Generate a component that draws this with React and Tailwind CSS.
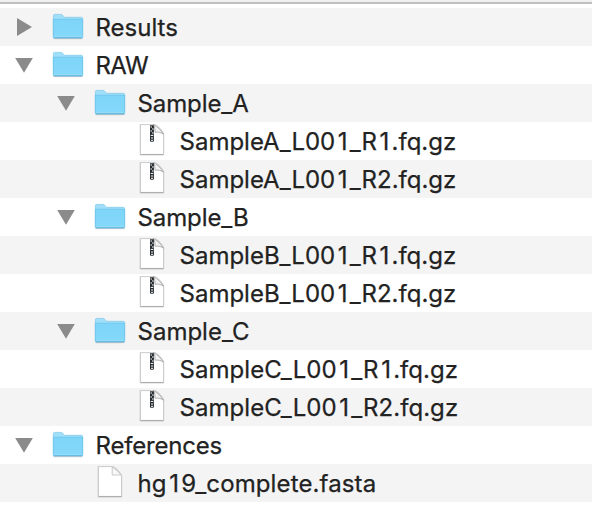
const rows = [
  { name: "Results", kind: "folder", pad: "pl-[14px]", open: false, track: "tracking-[0px]" },
  { name: "RAW", kind: "folder", pad: "pl-[14px]", open: true, track: "tracking-[-0.6px]" },
  { name: "Sample_A", kind: "folder", pad: "pl-[56px]", open: true, track: "tracking-[-0.1px]" },
  { name: "SampleA_L001_R1.fq.gz", kind: "zip", pad: "pl-[98px]", track: "tracking-[0px]" },
  { name: "SampleA_L001_R2.fq.gz", kind: "zip", pad: "pl-[98px]", track: "tracking-[0px]" },
  { name: "Sample_B", kind: "folder", pad: "pl-[56px]", open: true, track: "tracking-[-0.1px]" },
  { name: "SampleB_L001_R1.fq.gz", kind: "zip", pad: "pl-[98px]", track: "tracking-[0px]" },
  { name: "SampleB_L001_R2.fq.gz", kind: "zip", pad: "pl-[98px]", track: "tracking-[0px]" },
  { name: "Sample_C", kind: "folder", pad: "pl-[56px]", open: true, track: "tracking-[0px]" },
  { name: "SampleC_L001_R1.fq.gz", kind: "zip", pad: "pl-[98px]", track: "tracking-[0.05px]" },
  { name: "SampleC_L001_R2.fq.gz", kind: "zip", pad: "pl-[98px]", track: "tracking-[0.05px]" },
  { name: "References", kind: "folder", pad: "pl-[14px]", open: true, track: "tracking-[-0.2px]" },
  { name: "hg19_complete.fasta", kind: "file", pad: "pl-[56px]", track: "tracking-[0.12px]" },
];

// Gives the narrow digit 1 the same advance as the other digits.
function FileName({ name }) {
  return name.split(/(1)/).map((part, i) =>
    part === "1" ? <span key={i} className="pl-[2.6px] pr-[2.2px]">1</span> : part
  );
}

function Disclosure({ open }) {
  return (
    <svg width="20" height="38" viewBox="0 0 20 38" className="shrink-0">
      {open === true && <path d="M1.2 12H18.8L10 26.8Z" fill="#8b8b8b" />}
      {open === false && <path d="M3 10V28L18 19Z" fill="#8b8b8b" />}
    </svg>
  );
}

function Folder() {
  return (
    <svg width="36" height="38" viewBox="0 0 36 38" className="shrink-0">
      <defs>
        <linearGradient id="folderFront" x1="0" y1="0" x2="0" y2="1">
          <stop offset="0" stopColor="#7dd5f9" />
          <stop offset="1" stopColor="#85d8f9" />
        </linearGradient>
      </defs>
      <path d="M3.5 30.6H32.5" stroke="#000" strokeOpacity=".18" strokeWidth="1.2" />
      <path d="M3.4 29.5V7.6Q3.4 6.4 4.6 6.4H11Q12 6.4 12.7 7.2L13.6 8.6Q14.1 9.3 15 9.3H31.4Q32.6 9.3 32.6 10.5V29.5Z" fill="#a0dffa" stroke="#7cc5e6" strokeWidth=".7" />
      <path d="M3.3 11.2H32.7V28.8Q32.7 29.8 31.7 29.8H4.3Q3.3 29.8 3.3 28.8Z" fill="url(#folderFront)" stroke="#62bce5" strokeWidth=".6" />
      <path d="M3.5 28.6H32.5" stroke="#99dcfa" strokeWidth="1" />
      <path d="M3.8 29.8H32.2" stroke="#55acd4" strokeWidth=".7" />
    </svg>
  );
}

function Page({ zip }) {
  return (
    <svg width="36" height="38" viewBox="0 0 36 38" className="shrink-0">
      <path d="M6.4 3.1H21.2Q25 4.2 29.4 11.8V32.7H6.4Z" fill="none" stroke="#000" strokeOpacity=".12" strokeWidth="1.8" />
      <path d="M6.5 2.6H20.5Q24.6 4.6 29.5 11.5V32.4H6.5Z" fill="#fff" stroke="#bdbdbd" strokeWidth=".7" />
      <path d="M6.7 32.6H29.3" stroke="#a0a0a0" strokeWidth=".8" />
      {zip ? (
        <>
          <path d="M19 2.8C21.6 4.4 20.5 8 21.2 10.2C24.5 9.8 27 10.4 29.3 12.1C27 8.3 23.8 4.8 19.8 2.8Z" fill="#f5f5f5" stroke="#a5a5a5" strokeWidth=".9" />
          <path d="M16 3.2H19.9V18.8Q19.9 19.8 18.9 19.8H17Q16 19.8 16 18.8Z" fill="#252b2f" />
          <path d="M16.5 5H18M18 7H19.6M16.5 9H18M18 11H19.6M16.7 13.4H19.3M18 15V17M17 18.3H19" stroke="#fff" strokeWidth="1" />
        </>
      ) : (
        <path d="M20.2 2.9V11H29.2Q25 5.8 20.2 2.9Z" fill="#f8f8f8" stroke="#c4c4c4" strokeWidth=".9" />
      )}
    </svg>
  );
}

export default function App() {
  return (
    <main className="h-[522px] w-[592px] overflow-hidden bg-white font-['Inter',sans-serif] text-[#222]">
      <div className="h-1 border-b-2 border-[#bfbfbf] bg-[#f0f0f0]" />
      <ul className="pt-1">
        {rows.map((row) => (
          <li key={row.name} className={`flex h-[38px] items-center odd:bg-[#f4f4f4] ${row.pad}`}>
            <Disclosure open={row.open} />
            <span className="ml-4 flex">
              {row.kind === "folder" ? <Folder /> : <Page zip={row.kind === "zip"} />}
            </span>
            <span className={`ml-[9.5px] whitespace-nowrap pt-0.5 text-[24px] leading-[36px] [-webkit-text-stroke:0.25px_#222] ${row.track}`}>
              <FileName name={row.name} />
            </span>
          </li>
        ))}
      </ul>
    </main>
  );
}
